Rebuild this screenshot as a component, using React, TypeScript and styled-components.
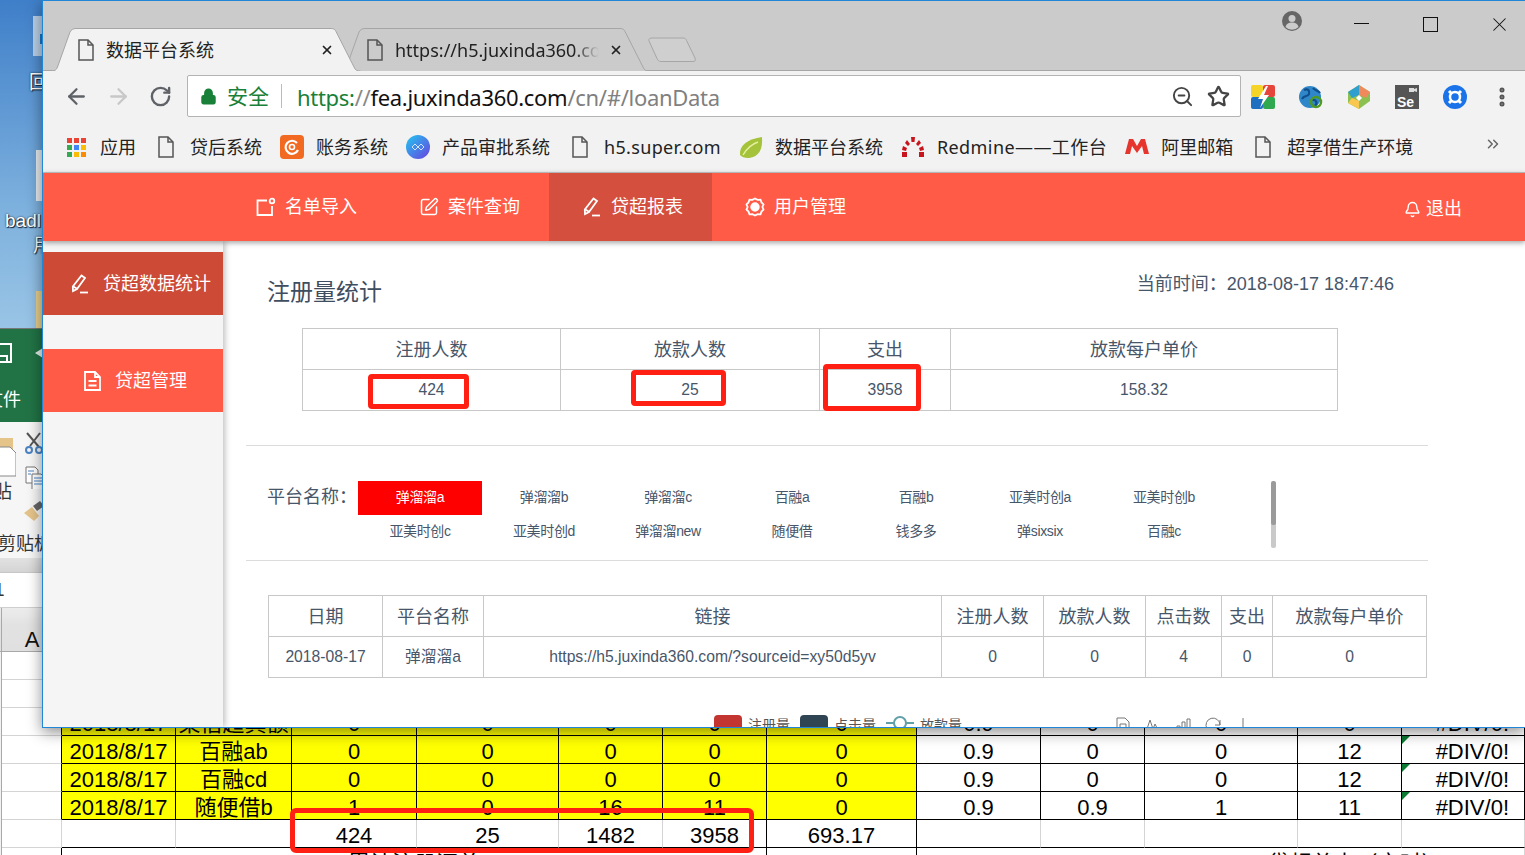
import React from "react";
import styled, { createGlobalStyle } from "styled-components";
import { ArrowLeft, ArrowRight, Bell, ChevronsRight, Lock, MoreVertical, RotateCw, SquarePen, Star, X, ZoomOut } from "lucide-react";

const cjk = `"Liberation Sans", "Noto Sans CJK SC", sans-serif`;
const chromeFont = `"Noto Sans", "Noto Sans CJK SC", sans-serif`;

const Global = createGlobalStyle`
  html, body { margin: 0; padding: 0; background: #fff; }
  * { box-sizing: border-box; }
`;

const Screen = styled.div`
  position: relative; width: 1525px; height: 855px; overflow: hidden;
  background: linear-gradient(180deg, #3f7fc9 0%, #7fb2de 25%, #9cc6e6 40%);
  font-family: ${cjk};
`;

/* desktop icons: items on a free canvas */
const DeskLabel = styled.span<{ $x: number; $y: number }>`
  position: absolute; left: ${p => p.$x}px; top: ${p => p.$y}px;
  color: #fff; font: 19px/24px ${cjk}; text-shadow: 1px 1px 1px #123, 0 0 2px #123;
  white-space: nowrap;
`;
const DeskShape = styled.div<{ $x: number; $y: number; $w: number; $h: number; $c: string }>`
  position: absolute; left: ${p => p.$x}px; top: ${p => p.$y}px;
  width: ${p => p.$w}px; height: ${p => p.$h}px; background: ${p => p.$c};
`;

/* excel window */
const Excel = styled.div`
  position: absolute; left: 0; top: 328px; width: 1525px; height: 527px;
  display: flex; flex-direction: column; background: #fff; overflow: hidden;
  border-top: 1px solid #777;
`;
const XlGreen = styled.div`
  height: 93px; flex: none; background: linear-gradient(90deg, #217346, #1f6f43 70%, #1a5f3a);
  display: flex; flex-direction: column; color: #fff; overflow: hidden;
`;
const XlQuick = styled.div`
  height: 47px; width: 43px; flex: none; display: flex; align-items: center; justify-content: space-between;
  padding-top: 0;
`;
const XlFileTab = styled.div`
  width: 21px; height: 46px; flex: none; font: 18px/48px ${cjk}; overflow: hidden; direction: rtl; white-space: nowrap;
`;
const XlRibbon = styled.div`
  height: 136px; width: 43px; flex: none; display: grid; grid-template-columns: 22px 21px; grid-template-rows: 110px 26px;
  background: #f6f6f6; overflow: hidden;
`;
const XlPaste = styled.div`
  display: flex; flex-direction: column; align-items: flex-start; padding-top: 15px; overflow: hidden; margin-left: -3px;
`;
const XlPasteLabel = styled.div`
  font: 19px/24px ${cjk}; color: #333; width: 12px; margin-top: 3px; overflow: hidden; direction: rtl; white-space: nowrap; margin-left: 3px;
`;
const XlTools = styled.div`
  display: flex; flex-direction: column; align-items: flex-end; gap: 12px; padding-top: 10px;
`;
const XlGroupName = styled.div`
  grid-column: 1 / span 2; font: 18px/24px ${cjk}; color: #333; white-space: nowrap; margin-left: -2px; width: 45px; overflow: hidden;
`;
const XlStrip = styled.div`
  height: 15px; flex: none; background: linear-gradient(#e2e2e2, #d4d4d4); border-bottom: 1px solid #c6c6c6;
`;
const XlFormula = styled.div`
  height: 35px; flex: none; background: #fff; font: 19px/34px ${cjk}; color: #333; overflow: hidden;
  text-indent: -6px; border-bottom: 1px solid #cfcfcf;
`;
const XlHeader = styled.div`
  height: 44px; flex: none; width: 100%; background: linear-gradient(#ececec, #e2e2e2 40%, #e0e0e0); border-bottom: 1px solid #a8a8a8;
  display: flex; align-items: flex-end;
`;
const XlRowGutter = styled.div`
  width: 2px; height: 100%; border-right: 1px solid #a9a9a9;
`;
const XlColA = styled.div`
  width: 60px; text-align: center; font: 22px/23px ${cjk}; color: #111;
`;
const XlGrid = styled.div`
  display: grid; flex: none;
  grid-template-columns: 2px 60px 114px 116px 125px 142px 104px 104px 150px 124px 104px 153px 104px 123px;
  grid-auto-rows: 28px;
  font: 22px/31px ${cjk}; color: #000;
`;
const XlCell = styled.div<{ $y?: boolean; $v?: string; $h?: string; $span?: number; $tri?: boolean; $right?: boolean; $shift?: number }>`
  position: relative; text-align: ${p => (p.$right ? "right" : "center")};
  ${p => (p.$right ? "padding-right: 15px;" : "")}
  ${p => (p.$shift ? `padding-left: ${p.$shift}px;` : "")}
  white-space: nowrap; overflow: hidden;
  background: ${p => (p.$y ? "#ffff00" : "#fff")};
  border-right: 1px solid ${p => p.$v || "#d4d4d4"};
  border-bottom: 1px solid ${p => p.$h || "#d4d4d4"};
  ${p => (p.$span ? `grid-column: span ${p.$span};` : "")}
  ${p => p.$tri ? `&::before { content: ""; position: absolute; left: 0; top: 0; border-top: 8px solid #0b7a33; border-right: 8px solid transparent; }` : ""}
`;
const XlGutterCell = styled.div`
  border-right: 1px solid #a9a9a9; background: #f2f2f2;
`;
const TotalMark = styled.div`
  position: absolute; left: 290px; top: 479px; width: 464px; height: 45px;
  border: 5px solid #ff2013; border-radius: 6px;
`;

/* chrome window */
const Chrome = styled.div`
  position: absolute; left: 42px; top: 0; width: 1483px; height: 728px;
  border: 1px solid #1f86d8; border-right: 0;
  display: flex; flex-direction: column; background: #f2f2f2; overflow: hidden;
  box-shadow: 0 4px 14px rgba(0, 0, 0, .45);
`;
const TabStrip = styled.div`
  height: 70px; flex: none; background: #cbcbcb; border-bottom: 1px solid #a6a6a6;
  display: flex; align-items: flex-end; padding-left: 8px; position: relative;
`;
const Tab = styled.div<{ $active?: boolean }>`
  position: relative; width: 310px; height: 43px; flex: none; margin-bottom: -1px;
  margin-left: ${p => (p.$active ? 0 : -21)}px; z-index: ${p => (p.$active ? 2 : 1)};
  display: flex; align-items: center; padding: 0 27px 0 27px; color: #222;
`;
const TabShape = styled.svg`
  position: absolute; left: 0; top: 0; width: 310px; height: 43px;
`;
const PageSvg = styled.svg<{ $c?: string }>`
  position: relative; flex: none; width: 16px; height: 22px; color: ${p => p.$c || "#555"};
`;
const TabTitle = styled.span<{ $fade?: boolean }>`
  position: relative; flex: 1; margin-left: 12px; font: 18px/26px ${chromeFont}; white-space: nowrap; overflow: hidden;
  ${p => p.$fade ? "-webkit-mask-image: linear-gradient(90deg, #000 86%, transparent 98%); mask-image: linear-gradient(90deg, #000 86%, transparent 98%);" : ""}
`;
const TabClose = styled(X)`
  position: relative; flex: none; width: 14px; height: 14px; margin-left: 6px; color: #222; stroke-width: 3;
`;
const NewTab = styled.svg`
  flex: none; width: 50px; height: 25px; margin: 0 0 8px -3px; position: relative; z-index: 0;
`;
const WinControls = styled.div`
  position: absolute; right: -9px; top: 0; display: flex; align-items: flex-start; height: 44px;
`;
const Avatar = styled.svg`
  width: 22px; height: 22px; margin: 9px 24px 0 0;
`;
const Ctrl = styled.div`
  width: 69px; height: 44px; display: flex; align-items: center; justify-content: center;
`;
const MinLine = styled.div`
  width: 15px; height: 1px; background: #111; margin-top: 1px;
`;
const MaxBox = styled.div`
  width: 15px; height: 15px; border: 1.5px solid #111; margin-top: 3px;
`;
const CloseX = styled(X)`
  width: 23px; height: 23px; color: #111; stroke-width: 1.1; margin-top: 3px;
`;

const Toolbar = styled.div`
  height: 51px; flex: none; display: flex; align-items: center; padding-left: 21px; background: #f2f2f2;
`;
const NavBtn = styled.div<{ $off?: boolean }>`
  width: 25px; height: 25px; margin-right: 17px; display: flex; align-items: center; justify-content: center;
  color: ${p => (p.$off ? "#c8c8c8" : "#5f6368")};
`;
const Omni = styled.div`
  width: 1054px; height: 42px; margin-left: -3px; background: #fff; border: 1px solid #b3b3b3; border-radius: 2px;
  display: flex; align-items: center; padding: 0 10px 0 12px; margin-right: 9px; margin-top: -1px;
`;
const SecureLabel = styled.span`
  color: #188038; font: 21px/28px ${chromeFont}; margin-left: 10px;
`;
const OmniSep = styled.div`
  width: 1px; height: 24px; background: #bbb; margin: 0 15px 0 12px;
`;
const UrlText = styled.div`
  flex: 1; font: 22px/30px ${chromeFont}; padding-top: 2px; white-space: nowrap; letter-spacing: -.3px; color: #808080;
`;
const UrlScheme = styled.span` color: #188038; `;
const UrlSlash = styled.span` color: #888; `;
const UrlHost = styled.span` color: #111; `;
const OmniIcon = styled.div`
  width: 24px; height: 24px; margin-left: 12px; color: #444; display: flex; align-items: center; justify-content: center;
`;
const Ext = styled.svg`
  width: 26px; height: 26px; flex: none; margin-right: 22px;
`;
const MenuDots = styled(MoreVertical)`
  width: 24px; height: 24px; color: #555; stroke-width: 3;
`;

const Bookmarks = styled.div`
  height: 50px; flex: none; display: flex; align-items: center; padding-left: 21px; background: #f2f2f2; position: relative; gap: 18px;
`;
const Mark = styled.div<{ $ls?: number }>`
  display: flex; align-items: center; gap: 12px; color: #222; font: 18px/26px ${chromeFont}; white-space: nowrap; height: 30px;
  letter-spacing: ${p => p.$ls || 0}px;
`;
const MarkIconBox = styled.div`
  width: 24px; height: 24px; flex: none; display: flex; align-items: center; justify-content: center;
`;
const AppsGrid = styled.div`
  display: grid; grid-template-columns: repeat(3, 5px); grid-auto-rows: 5px; gap: 2px;
`;
const AppDot = styled.i<{ $c: string }>` background: ${p => p.$c}; `;
const MoreMarks = styled(ChevronsRight)`
  position: absolute; left: 1441px; top: 13px; width: 18px; height: 18px; color: #666;
`;

const AppHeader = styled.header`
  height: 69px; flex: none; background: #ff5b47; border-top: 1px solid #b5b5b5; padding-left: 180px;
  display: flex; align-items: stretch; color: #fff; position: relative; z-index: 3; box-shadow: 0 2px 5px rgba(0, 0, 0, .35);
`;
const NavItem = styled.div<{ $on?: boolean }>`
  width: 163px; padding: 0 0 1px 33px; display: flex; align-items: center; gap: 9px;
  background: ${p => (p.$on ? "#d44f3d" : "transparent")}; font: 18px/26px ${cjk}; white-space: nowrap;
`;
const NavGlyph = styled.svg` width: 20px; height: 20px; flex: none; `;
const Logout = styled.div`
  margin-left: auto; padding: 4px 63px 0 0; display: flex; align-items: center; gap: 5px; font: 18px/26px ${cjk};
`;

const Body = styled.div` flex: 1; display: flex; min-height: 0; background: #fff; position: relative; `;
const Sidebar = styled.aside`
  width: 180px; flex: none; background: #f5f5f5; padding-top: 11px; display: flex; flex-direction: column; gap: 34px;
  box-shadow: 2px 0 6px rgba(0, 0, 0, .25); position: relative; z-index: 2;
`;
const SideItem = styled.div<{ $on?: boolean; $pad: number }>`
  height: 63px; display: flex; align-items: center; padding-left: ${p => p.$pad}px; gap: 13px; color: #fff;
  background: ${p => (p.$on ? "#cc4a36" : "#ff5b47")}; font: 18px/26px ${cjk}; white-space: nowrap;
`;
const Main = styled.main`
  flex: 1; min-width: 0; padding: 0 97px 0 23px; color: #475669; overflow: hidden;
`;
const HeadRow = styled.div`
  height: 87px; padding: 30px 34px 0 21px; display: flex; justify-content: space-between; align-items: flex-start;
`;
const Title = styled.h2`
  margin: 6px 0 0; font: 400 23px/30px ${cjk}; color: #3f4d60;
`;
const Clock = styled.div` font: 18px/26px ${cjk}; `;
const DataTable = styled.table<{ $w: number; $ml: number }>`
  width: ${p => p.$w}px; margin-left: ${p => p.$ml}px; border-collapse: collapse; table-layout: fixed; text-align: center;
  th, td { border: 1px solid #c8c8c8; padding: 0; height: 41px; white-space: nowrap; overflow: hidden; }
  th { font: 400 18px/24px ${cjk}; padding-top: 1px; }
  td { font: 15.7px/22px ${cjk}; }
`;
const Divider = styled.hr`
  margin: 0; border: 0; border-top: 1px solid #dcdcdc;
`;
const TopDivider = styled(Divider)` margin-top: 34px; `;
const FilterRow = styled.div`
  display: flex; padding: 35px 0 11px 22px; height: 114px;
`;
const FilterLabel = styled.div` width: 90px; flex: none; font: 18px/33px ${cjk}; margin-left: -1px; margin-right: 1px; `;
const FilterGrid = styled.div`
  display: grid; grid-template-columns: repeat(7, 124px); grid-auto-rows: 34px; width: 868px; flex: none;
`;
const FilterItem = styled.div<{ $on?: boolean }>`
  display: flex; align-items: center; justify-content: center; font: 14px/20px ${cjk}; white-space: nowrap; letter-spacing: -.35px;
  padding-bottom: 2px;
  background: ${p => (p.$on ? "#ff0000" : "transparent")}; color: ${p => (p.$on ? "#fff" : "#475669")};
`;
const Scroll = styled.div`
  width: 5px; height: 67px; margin-left: 45px; border-radius: 2px; background: #c9c9c9; overflow: hidden; flex: none;
`;
const ScrollThumb = styled.div` height: 44px; background: #9a9a9a; border-radius: 2px; `;
const TableGap = styled.div` height: 34px; `;
const Legend = styled.div`
  display: flex; align-items: flex-start; margin: 37px 0 0 468px; height: 20px; font: 14px/20px ${cjk}; color: #555; white-space: nowrap;
`;
const LegendBox = styled.i<{ $c: string }>`
  width: 28px; height: 16px; border-radius: 4px; background: ${p => p.$c}; margin-right: 6px; flex: none;
`;
const LegendLine = styled.svg` width: 28px; height: 16px; margin-right: 6px; flex: none; `;
const LegendText = styled.span<{ $mr: number }>` margin-right: ${p => p.$mr}px; `;
const ToolIcon = styled.svg<{ $mr: number }>` width: 16px; height: 16px; margin: 2px ${p => p.$mr}px 0 0; flex: none; `;
const RedMark = styled.div<{ $x: number; $y: number; $w: number; $h: number }>`
  position: absolute; z-index: 4; left: ${p => p.$x - 43}px; top: ${p => p.$y - 241}px;
  width: ${p => p.$w}px; height: ${p => p.$h}px; border: 5px solid #ff2013; border-radius: 4px;
`;

const tabPath = "M0.5 43c3 0 5-1 6-4L19 4c1-2 3-3.5 6-3.5h255c3 0 4 1 5 3L303 39c1 3 3 4 6.5 4";

const PageIcon = () => (
  <PageSvg viewBox="0 0 16 22" fill="none" stroke="currentColor" strokeWidth="1.5">
    <path d="M1 1h9l5 5v15H1z" />
    <path d="M10 1v5h5" />
  </PageSvg>
);

const PenGlyph = () => (
  <NavGlyph viewBox="0 0 20 20" fill="none" stroke="#fff" strokeWidth="1.8">
    <path d="M11.500 1.500l3.500 2.500-8 11-4 2-.2-4.500z" />
    <path d="M3.300 12.500l4.200 2.500" />
    <path d="M10 18.500h8" />
  </NavGlyph>
);

const platforms = ["弹溜溜a", "弹溜溜b", "弹溜溜c", "百融a", "百融b", "亚美时创a", "亚美时创b", "亚美时创c", "亚美时创d", "弹溜溜new", "随便借", "钱多多", "弹sixsix", "百融c"];

const yellowRows = [
  ["2018/8/17", "渠借超真额", "0", "0", "0", "0", "0", "0.9", "0", "0", "0", "#DIV/0!"],
  ["2018/8/17", "百融ab", "0", "0", "0", "0", "0", "0.9", "0", "0", "12", "#DIV/0!"],
  ["2018/8/17", "百融cd", "0", "0", "0", "0", "0", "0.9", "0", "0", "12", "#DIV/0!"],
  ["2018/8/17", "随便借b", "1", "0", "16", "11", "0", "0.9", "0.9", "1", "11", "#DIV/0!"],
];
const totals = ["", "", "424", "25", "1482", "3958", "693.17", "", "", "", "", ""];

const bookmarkApps = ["#ea4335", "#ea4335", "#ea4335", "#34a853", "#4285f4", "#fbbc05", "#34a853", "#fbbc05", "#fb8c00"];

export default function App() {
  return (
    <Screen>
      <Global />
      <DeskShape $x={33} $y={16} $w={12} $h={40} $c="#b9cfe6" />
      <DeskShape $x={40} $y={34} $w={5} $h={10} $c="#1c78c8" />
      <DeskLabel $x={29} $y={71}>回</DeskLabel>
      <DeskShape $x={36} $y={150} $w={8} $h={51} $c="#e6ebef" />
      <DeskLabel $x={5} $y={209}>badl</DeskLabel>
      <DeskLabel $x={33} $y={234}>用</DeskLabel>
      <DeskShape $x={36} $y={291} $w={8} $h={38} $c="#e7cf8d" />

      <Excel>
        <XlGreen>
          <XlQuick>
            <svg width="12" height="22" viewBox="0 0 12 22" fill="none" stroke="#fff" strokeWidth="2"><path d="M-4 2h15v18H-4M-2 14h9v6" /></svg>
            <svg width="11" height="16" viewBox="0 0 11 16" fill="#e6efe9"><path d="M11 3L3 8l8 5v-3h3V6h-3z" /></svg>
          </XlQuick>
          <XlFileTab>文件</XlFileTab>
        </XlGreen>
        <XlRibbon>
          <XlPaste>
            <svg width="19" height="40" viewBox="0 0 19 40" fill="none">
              <path d="M0 1h16v12H0z" fill="#e5c48a" />
              <path d="M0 10h13l6 6v23H0z" fill="#fff" stroke="#888" />
            </svg>
            <XlPasteLabel>粘贴</XlPasteLabel>
          </XlPaste>
          <XlTools>
            <svg width="19" height="22" viewBox="0 0 19 22" fill="none" stroke="#555" strokeWidth="2">
              <path d="M3 1l12 14M16 1L6 14" />
              <circle cx="5" cy="18" r="3" stroke="#4b83c4" />
              <circle cx="15" cy="18" r="3" stroke="#4b83c4" />
            </svg>
            <svg width="18" height="23" viewBox="0 0 18 23" fill="#fff" stroke="#777">
              <path d="M1 1h9l3 3v13H1z" />
              <path d="M7 8h9l3 3v13H7z" />
              <path d="M3 5h6M3 8h3M9 12h8M9 15h8M9 18h8" stroke="#4b83c4" />
            </svg>
            <svg width="19" height="21" viewBox="0 0 19 21">
              <path d="M0 12l8-6 7 9-5 5z" fill="#e5c48a" />
              <path d="M9 5l7-5 4 5-7 5z" fill="#666" />
            </svg>
          </XlTools>
          <XlGroupName>剪贴板</XlGroupName>
        </XlRibbon>
        <XlStrip />
        <XlFormula>1</XlFormula>
        <XlHeader>
          <XlRowGutter />
          <XlColA>A</XlColA>
        </XlHeader>
        <XlGrid>
          {[0, 1].map(r => (
            <React.Fragment key={r}>
              <XlGutterCell />
              <XlCell />
              <XlCell $span={12} />
            </React.Fragment>
          ))}
          {yellowRows.map((row, r) => (
            <React.Fragment key={r}>
              <XlGutterCell />
              <XlCell $v="#000" />
              {row.map((v, i) => (
                <XlCell key={i} $y={i < 7} $v="#000" $h="#000" $tri={i === 11 && r > 0} $right={i === 11}>{v}</XlCell>
              ))}
            </React.Fragment>
          ))}
          <XlGutterCell />
          <XlCell />
          {totals.map((v, i) => (
            <XlCell key={i} $h="#000" $v={i === 5 || i === 6 ? "#000" : "#d4d4d4"}>{v}</XlCell>
          ))}
          <XlGutterCell />
          <XlCell $v="#000" />
          <XlCell $span={6} $v="#000">累计注册汇总</XlCell>
          <XlCell $v="#000" />
          <XlCell $span={5} $shift={270}>贷超总支（实时）</XlCell>
        </XlGrid>
        <TotalMark />
      </Excel>

      <Chrome>
        <TabStrip>
          <Tab $active>
            <TabShape viewBox="0 0 310 43"><path d={tabPath} fill="#f2f2f2" stroke="#a6a6a6" /></TabShape>
            <PageIcon />
            <TabTitle>数据平台系统</TabTitle>
            <TabClose />
          </Tab>
          <Tab>
            <TabShape viewBox="0 0 310 43"><path d={tabPath} fill="#cbcbcb" stroke="#a6a6a6" /></TabShape>
            <PageIcon />
            <TabTitle $fade>https://h5.juxinda360.com</TabTitle>
            <TabClose />
          </Tab>
          <NewTab viewBox="0 0 50 25">
            <path d="M6 1h30c2 0 3 1 3.500 2.500L48 21c1 2.500 0 3.500-2 3.500H14c-2 0-3-1-4-3L2 4C1 2 3 1 6 1z" fill="#cfcfcf" stroke="#a6a6a6" />
          </NewTab>
          <WinControls>
            <Avatar viewBox="0 0 22 22">
              <path d="M11 1a10 10 0 1 0 0 20 10 10 0 0 0 0-20z" fill="#666" />
              <circle cx="11" cy="8.500" r="3.500" fill="#cbcbcb" />
              <path d="M4.500 17c1-3.500 3.500-4.500 6.500-4.500s5.500 1 6.500 4.500a9 9 0 0 1-13 0z" fill="#cbcbcb" />
            </Avatar>
            <Ctrl><MinLine /></Ctrl>
            <Ctrl><MaxBox /></Ctrl>
            <Ctrl><CloseX /></Ctrl>
          </WinControls>
        </TabStrip>

        <Toolbar>
          <NavBtn><ArrowLeft size={25} strokeWidth={2.2} /></NavBtn>
          <NavBtn $off><ArrowRight size={25} strokeWidth={2.2} /></NavBtn>
          <NavBtn><RotateCw size={23} strokeWidth={2.5} /></NavBtn>
          <Omni>
            <Lock size={17} color="#188038" fill="#188038" strokeWidth={2.4} />
            <SecureLabel>安全</SecureLabel>
            <OmniSep />
            <UrlText>
              <UrlScheme>https:</UrlScheme><UrlSlash>//</UrlSlash><UrlHost>fea.juxinda360.com</UrlHost>/cn/#/loanData
            </UrlText>
            <OmniIcon><ZoomOut size={23} strokeWidth={2} /></OmniIcon>
            <OmniIcon><Star size={23} strokeWidth={2.4} /></OmniIcon>
          </Omni>
          <Ext viewBox="0 0 26 26">
            <rect x="1" y="1" width="12" height="12" rx="2" fill="#f5d327" />
            <rect x="13" y="1" width="12" height="12" rx="2" fill="#e5453b" />
            <rect x="1" y="13" width="12" height="12" rx="2" fill="#1e6fc0" />
            <rect x="13" y="13" width="12" height="12" rx="2" fill="#2fa84f" />
            <path d="M16 2l-8 13h5l-3 9 9-13h-5l4-9z" fill="#fff" />
          </Ext>
          <Ext viewBox="0 0 26 26">
            <circle cx="12" cy="13" r="11" fill="#2f86c9" />
            <path d="M6 6c4-2 6 1 5 4s-5 1-7 5M14 16c4-1 6 3 3 6M15 4c2 3 5 2 7 5" fill="none" stroke="#0f4f8c" strokeWidth="2.200" />
            <circle cx="18" cy="18" r="5" fill="none" stroke="#4f9a22" strokeWidth="2.500" />
          </Ext>
          <Ext viewBox="0 0 26 26">
            <path d="M13 1L2 8v11l11 6 11-8V8z" fill="#8cc152" />
            <path d="M13 1L2 8l4 6 7-3z" fill="#2f9fd0" />
            <path d="M13 1l11 7-4 6-7-3z" fill="#f08a5d" />
            <path d="M2 19l4-5 7 3v8z" fill="#f9c74f" />
            <path d="M13 11l-3 3 3 3 3-3z" fill="#fff" />
          </Ext>
          <Ext viewBox="0 0 26 26">
            <rect x="1" y="1" width="24" height="24" fill="#555" />
            <rect x="15" y="4" width="5" height="4" fill="#ddd" />
            <path d="M20 5l3-1v4l-3-1z" fill="#ddd" />
            <text x="3" y="23" fontFamily="Liberation Sans" fontSize="14" fontWeight="700" fill="#fff">Se</text>
          </Ext>
          <Ext viewBox="0 0 26 26">
            <circle cx="13" cy="13" r="12" fill="#1a73e8" />
            <circle cx="13" cy="13" r="5" fill="none" stroke="#fff" strokeWidth="2.500" />
            <path d="M7 7l3 3M19 7l-3 3M7 19l3-3M19 19l-3-3" stroke="#fff" strokeWidth="3" />
          </Ext>
          <MenuDots />
        </Toolbar>

        <Bookmarks>
          <Mark>
            <MarkIconBox><AppsGrid>{bookmarkApps.map((c, i) => <AppDot key={i} $c={c} />)}</AppsGrid></MarkIconBox>
            应用
          </Mark>
          <Mark><MarkIconBox><PageIcon /></MarkIconBox>贷后系统</Mark>
          <Mark>
            <MarkIconBox>
              <svg width="24" height="24" viewBox="0 0 24 24">
                <rect width="24" height="24" rx="4" fill="#f26a21" />
                <path d="M17 8a6.500 6.500 0 1 0 1 7" fill="none" stroke="#fff" strokeWidth="2.200" />
                <circle cx="12" cy="12" r="2.500" fill="none" stroke="#fff" strokeWidth="1.600" />
              </svg>
            </MarkIconBox>
            账务系统
          </Mark>
          <Mark>
            <MarkIconBox>
              <svg width="24" height="24" viewBox="0 0 24 24">
                <defs><linearGradient id="pg" x1="0" y1="0" x2="1" y2="1"><stop offset="0" stopColor="#21c8f0" /><stop offset="1" stopColor="#6a3fe0" /></linearGradient></defs>
                <circle cx="12" cy="12" r="12" fill="url(#pg)" />
                <path d="M6 12l3-3 3 3 3-3 3 3-3 3-3-3-3 3z" fill="none" stroke="#cfe4ff" />
              </svg>
            </MarkIconBox>
            产品审批系统
          </Mark>
          <Mark $ls={0.33}><MarkIconBox><PageIcon /></MarkIconBox>h5.super.com</Mark>
          <Mark>
            <MarkIconBox>
              <svg width="24" height="24" viewBox="0 0 24 24">
                <path d="M1 20C0 10 9 4 23 2c1 12-3 20-13 21-4 .3-7-1-9-3z" fill="#a5c33a" />
                <path d="M4 20c4-7 9-11 15-13" fill="none" stroke="#e4f0a0" strokeWidth="1.400" />
              </svg>
            </MarkIconBox>
            数据平台系统
          </Mark>
          <Mark $ls={0.42}>
            <MarkIconBox>
              <svg width="24" height="20" viewBox="0 0 24 20" fill="#c8141c">
                <path d="M1 15h5v5H1zM18 15h5v5h-5zM2 9l4 2-1 3-4-1zM22 9l-4 2 1 3 4-1zM6 3l3 4-2 2-3-3zM18 3l-3 4 2 2 3-3zM10 0h4l-.5 5h-3z" />
              </svg>
            </MarkIconBox>
            Redmine——工作台
          </Mark>
          <Mark>
            <MarkIconBox>
              <svg width="24" height="20" viewBox="0 0 24 20"><path d="M0 17L4 2h4l4 7 4-7h4l4 15h-5l-2-8-5 7-5-7-2 8z" fill="#e5352d" /></svg>
            </MarkIconBox>
            阿里邮箱
          </Mark>
          <Mark><MarkIconBox><PageIcon /></MarkIconBox>超享借生产环境</Mark>
          <MoreMarks />
        </Bookmarks>

        <AppHeader>
          <NavItem>
            <NavGlyph viewBox="0 0 20 20" fill="none" stroke="#fff" strokeWidth="1.800">
              <path d="M11 3.500H1.500V18H16V9" />
              <circle cx="16" cy="4" r="2.300" />
            </NavGlyph>
            名单导入
          </NavItem>
          <NavItem>
            <SquarePen size={20} strokeWidth={1.8} />
            案件查询
          </NavItem>
          <NavItem $on><PenGlyph />贷超报表</NavItem>
          <NavItem>
            <NavGlyph viewBox="0 0 20 20" fill="none" stroke="#fff" strokeWidth="1.800">
              <path d="M10 1.500l2.600 1.400 2.900-.2 1 2.700 2 2.100-1.100 2.500 1.100 2.500-2 2.100-1 2.700-2.900-.2L10 18.500l-2.600-1.400-2.900.2-1-2.700-2-2.100 1.100-2.500L1.500 7.500l2-2.100 1-2.700 2.900.2z" />
              <circle cx="10" cy="10" r="3.800" fill="#fff" />
            </NavGlyph>
            用户管理
          </NavItem>
          <Logout><Bell size={17} strokeWidth={2} />退出</Logout>
        </AppHeader>

        <Body>
          <Sidebar>
            <SideItem $on $pad={27}><PenGlyph />贷超数据统计</SideItem>
            <SideItem $pad={40}>
              <svg width="19" height="20" viewBox="0 0 19 20" fill="none" stroke="#fff" strokeWidth="1.800">
                <path d="M2 1h10l5 5v13H2z" />
                <path d="M12 1v5h5M5.500 10h8M5.500 14.500h8" />
              </svg>
              贷超管理
            </SideItem>
          </Sidebar>
          <Main>
            <HeadRow>
              <Title>注册量统计</Title>
              <Clock>当前时间：2018-08-17 18:47:46</Clock>
            </HeadRow>
            <DataTable $w={1035} $ml={56}>
              <colgroup><col width="258" /><col width="259" /><col width="131" /><col width="387" /></colgroup>
              <thead><tr><th>注册人数</th><th>放款人数</th><th>支出</th><th>放款每户单价</th></tr></thead>
              <tbody><tr><td>424</td><td>25</td><td>3958</td><td>158.32</td></tr></tbody>
            </DataTable>
            <TopDivider />
            <FilterRow>
              <FilterLabel>平台名称：</FilterLabel>
              <FilterGrid>
                {platforms.map((p, i) => <FilterItem key={p} $on={i === 0}>{p}</FilterItem>)}
              </FilterGrid>
              <Scroll><ScrollThumb /></Scroll>
            </FilterRow>
            <Divider />
            <TableGap />
            <DataTable $w={1158} $ml={22}>
              <colgroup><col width="114" /><col width="101" /><col width="458" /><col width="102" /><col width="102" /><col width="76" /><col width="51" /><col width="154" /></colgroup>
              <thead><tr><th>日期</th><th>平台名称</th><th>链接</th><th>注册人数</th><th>放款人数</th><th>点击数</th><th>支出</th><th>放款每户单价</th></tr></thead>
              <tbody><tr><td>2018-08-17</td><td>弹溜溜a</td><td>https://h5.juxinda360.com/?sourceid=xy50d5yv</td><td>0</td><td>0</td><td>4</td><td>0</td><td>0</td></tr></tbody>
            </DataTable>
            <Legend>
              <LegendBox $c="#c23531" />
              <LegendText $mr={10}>注册量</LegendText>
              <LegendBox $c="#2f4554" />
              <LegendText $mr={10}>点击量</LegendText>
              <LegendLine viewBox="0 0 28 16" fill="none" stroke="#61a0a8" strokeWidth="2">
                <path d="M0 8h8M20 8h8" /><circle cx="14" cy="8" r="6" />
              </LegendLine>
              <LegendText $mr={153}>放款量</LegendText>
              <ToolIcon $mr={14} viewBox="0 0 16 16" fill="none" stroke="#777"><path d="M2 1h8l4 4v10H2zM5 7h6v5H5z" /></ToolIcon>
              <ToolIcon $mr={14} viewBox="0 0 16 16" fill="none" stroke="#777"><path d="M1 15L5 3l3 9 2-5 4 8" /></ToolIcon>
              <ToolIcon $mr={14} viewBox="0 0 16 16" fill="none" stroke="#777"><path d="M2 15V9h3v6M7 15V5h3v10M12 15V2h3v13" /></ToolIcon>
              <ToolIcon $mr={14} viewBox="0 0 16 16" fill="none" stroke="#777"><path d="M15 8a7 7 0 1 0-2 5M15 3v5h-5" /></ToolIcon>
              <ToolIcon $mr={0} viewBox="0 0 16 16" fill="none" stroke="#777"><path d="M8 1v14M1 12h14" /></ToolIcon>
            </Legend>
          </Main>
          <RedMark $x={368} $y={374} $w={101} $h={35} />
          <RedMark $x={631} $y={370} $w={95} $h={36} />
          <RedMark $x={823} $y={364} $w={98} $h={47} />
        </Body>
      </Chrome>
    </Screen>
  );
}
